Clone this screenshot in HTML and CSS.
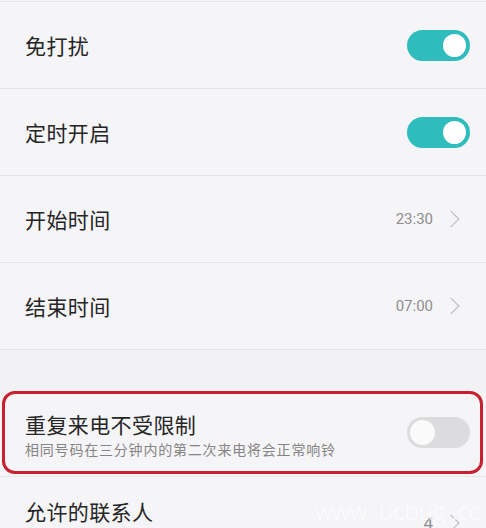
FILE: index.html
```html
<!DOCTYPE html>
<html>

<head>
    <meta name="viewport" content="width=device-width, initial-scale=1">
    <link rel="stylesheet" href="styles.css">
</head>

<body>

    <ul class="settings">
        <li class="row">
            <span class="label">免打扰</span>
            <span class="switch on"></span>
        </li>
        <li class="row">
            <span class="label">定时开启</span>
            <span class="switch on"></span>
        </li>
        <li class="row">
            <span class="label">开始时间</span>
            <span class="value">23:30<i class="chevron"></i></span>
        </li>
        <li class="row">
            <span class="label">结束时间</span>
            <span class="value">07:00<i class="chevron"></i></span>
        </li>
    </ul>

    <div class="gap"></div>

    <!-- 강조 표시된 항목 -->
    <div class="row marked">
        <div class="text">
            <span class="label">重复来电不受限制</span>
            <span class="hint">相同号码在三分钟内的第二次来电将会正常响铃</span>
        </div>
        <span class="switch"></span>
    </div>

    <div class="row last">
        <span class="label">允许的联系人</span>
        <span class="value count">4<i class="chevron"></i></span>
    </div>

    <span class="stamp">www. ucbug .cc</span>

</body>

</html>
```

FILE: styles.css
```css
body {
    margin: 0;
    background: #f5f4f7;
    font-family: "Noto Sans CJK SC", "Noto Sans", sans-serif;
    color: #252525;
    height: 528px;
    overflow: hidden;
    position: relative;
}

.settings {
    list-style-type: none; /* 마커 제거 */
    margin: 0;
    padding: 1px 0 0;
}

.settings .row:first-child {
    border-top: 1px solid #e4e3e7;
}

.row {
    display: flex;
    align-items: center;
    justify-content: space-between;
    height: 86px;
    padding: 0 16px 0 25px;
    border-bottom: 1px solid #e4e3e7;
}

.label {
    font-size: 21px;
    line-height: 28px;
    letter-spacing: 0.4px;
}

/* 토글 스위치 */
.switch {
    width: 63px;
    height: 31px;
    border-radius: 16px;
    background: #dcdbdd;
    position: relative;
    flex-shrink: 0;
}

.switch::after {
    content: "";
    position: absolute;
    left: 3px;
    top: 3px;
    width: 25px;
    height: 25px;
    border-radius: 50%;
    background: #fafafa;
}

.switch.on {
    background: #2fbcbd;
}

.switch.on::after {
    left: auto;
    right: 4px;
    top: 4px;
    width: 23px;
    height: 23px;
    background: #fff;
}

.value {
    display: flex;
    align-items: center;
    font-family: Roboto, "Noto Sans", sans-serif;
    font-size: 15px;
    color: #8e8e8e;
    padding-right: 13px;
}

/* 오른쪽 화살표 */
.chevron {
    display: inline-block;
    width: 11px;
    height: 11px;
    border-top: 1.5px solid #b9b9bb;
    border-right: 1.5px solid #b9b9bb;
    transform: rotate(45deg);
    margin-left: 12px;
}

.gap {
    height: 41px;
    background: #f2f1f4;
}

.marked {
    height: 77px;
    margin: 0 3px 2px 2px;
    padding: 0 10px 0 20px;
    border: 3px solid #c8202f;
    border-radius: 13px;
}

.marked .text {
    display: flex;
    flex-direction: column;
    padding-top: 4px;
}

.hint {
    font-size: 14px;
    line-height: 20px;
    letter-spacing: 0.8px;
    color: #858585;
    margin-top: 1px;
}

.last {
    align-items: flex-start;
    padding-top: 20px;
    height: 60px;
    border-top: 1px solid #e4e3e7;
    border-bottom: none;
}

.count {
    margin-top: 16px;
    font-size: 17px;
}

/* 사이트 워터마크 */
.stamp {
    position: absolute;
    left: 315px;
    top: 496px;
    font-family: "Open Sans", sans-serif;
    font-weight: 300;
    font-size: 24px;
    line-height: 30px;
    color: rgba(255, 255, 255, 0.85);
    white-space: nowrap;
}
```
